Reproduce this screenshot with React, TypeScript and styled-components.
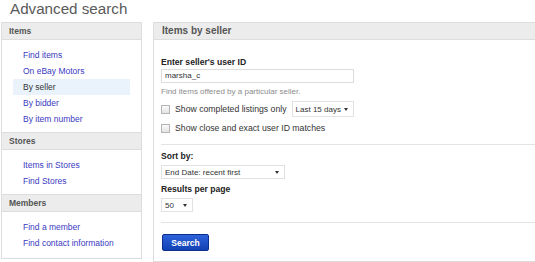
import React, { FC } from "react";
import styled, { createGlobalStyle } from "styled-components";

const GlobalStyle = createGlobalStyle`
  html, body {
    margin: 0;
    padding: 0;
    background: #ffffff;
    overflow: hidden;
  }
  body {
    font-family: "Liberation Sans", Arial, sans-serif;
    color: #333333;
  }
`;

interface NavSection {
  title: string;
  links: string[];
}

const sections: NavSection[] = [
  {
    title: "Items",
    links: ["Find items", "On eBay Motors", "By seller", "By bidder", "By item number"],
  },
  { title: "Stores", links: ["Items in Stores", "Find Stores"] },
  { title: "Members", links: ["Find a member", "Find contact information"] },
];

const Sidebar: FC<{ active: string }> = ({ active }) => (
  <SidePanel>
    {sections.map((s) => (
      <section key={s.title}>
        <SideHeader>{s.title}</SideHeader>
        <LinkList>
          {s.links.map((l) => (
            <NavLink key={l} $active={l === active}>
              {l}
            </NavLink>
          ))}
        </LinkList>
      </section>
    ))}
  </SidePanel>
);

const Select: FC<{ value: string; width: number }> = ({ value, width }) => (
  <SelectBox style={{ width }}>
    <span>{value}</span>
    <Caret />
  </SelectBox>
);

export default function App() {
  return (
    <Page>
      <GlobalStyle />
      <Title>Advanced search</Title>
      <Columns>
        <Sidebar active="By seller" />
        <MainPanel>
          <MainHeader>Items by seller</MainHeader>
          <Body>
            <Label>Enter seller's user ID</Label>
            <TextInput>marsha_c</TextInput>
            <Hint>Find items offered by a particular seller.</Hint>
            <CheckRow $top={3}>
              <Checkbox />
              <span>Show completed listings only</span>
              <Select value="Last 15 days" width={62} />
            </CheckRow>
            <CheckRow $top={3}>
              <Checkbox />
              <span>Show close and exact user ID matches</span>
            </CheckRow>
            <Divider $top={8} />
            <Label $top={5}>Sort by:</Label>
            <Select value="End Date: recent first" width={124} />
            <Label $top={4}>Results per page</Label>
            <Select value="50" width={32} />
            <Divider $top={10} />
            <SearchButton>Search</SearchButton>
          </Body>
        </MainPanel>
      </Columns>
    </Page>
  );
}

const Page = styled.div`
  width: 600px;
`;

const Title = styled.h1`
  margin: 0 0 0 10px;
  height: 22px;
  font-size: 15.2px;
  line-height: 18px;
  font-weight: 400;
  color: #5a5a5a;
`;

const Columns = styled.div`
  display: flex;
  align-items: flex-start;
  gap: 11px;
  padding-left: 1px;
`;

const SidePanel = styled.div`
  width: 139px;
  border: 1px solid #dddddd;
  section + section {
    border-top: 1px solid #dddddd;
  }
  section:last-child > div:last-child {
    padding-bottom: 7px;
  }
`;

const SideHeader = styled.div`
  height: 16px;
  line-height: 16px;
  padding-left: 7px;
  background: #ececec;
  border-bottom: 1px solid #dddddd;
  font-size: 8.5px;
  font-weight: 700;
  color: #555555;
`;

const LinkList = styled.div`
  padding: 7px 11px 5px;
`;

const NavLink = styled.div<{ $active?: boolean }>`
  height: 16px;
  line-height: 16px;
  padding-left: 10px;
  font-size: 8.5px;
  color: ${(p) => (p.$active ? "#333333" : "#3a3ac2")};
  background: ${(p) => (p.$active ? "#eaf3fc" : "transparent")};
`;

const MainPanel = styled.div`
  width: 420px;
  border: 1px solid #dddddd;
  border-right: none;
`;

const MainHeader = styled.div`
  height: 16px;
  line-height: 16px;
  padding-left: 8px;
  background: #ececec;
  border-bottom: 1px solid #dddddd;
  font-size: 10px;
  font-weight: 700;
  color: #555555;
`;

const Body = styled.div`
  display: flex;
  flex-direction: column;
  align-items: flex-start;
  padding: 16px 0 10px 7px;
  font-size: 8.7px;
`;

const Label = styled.div<{ $top?: number }>`
  margin-top: ${(p) => p.$top ?? 0}px;
  line-height: 12px;
  font-size: 8.6px;
  font-weight: 700;
  color: #222222;
`;

const TextInput = styled.div`
  margin-top: 1px;
  box-sizing: border-box;
  width: 193px;
  height: 14px;
  line-height: 12px;
  padding-left: 3px;
  border: 1px solid #dcdcdc;
  font-size: 8px;
  color: #333333;
`;

const Hint = styled.div`
  margin-top: 3px;
  line-height: 12px;
  font-size: 8px;
  color: #8c8c8c;
`;

const CheckRow = styled.div<{ $top: number }>`
  margin-top: ${(p) => p.$top}px;
  display: flex;
  align-items: center;
  height: 16px;
  gap: 4px;
  color: #333333;
  white-space: nowrap;
`;

const Checkbox = styled.span`
  box-sizing: border-box;
  width: 9px;
  height: 9px;
  margin-right: 1px;
  border: 1px solid #b5b5b5;
  background: linear-gradient(#fafafa, #e4e4e4);
`;

const SelectBox = styled.div`
  box-sizing: border-box;
  margin-top: 3px;
  height: 14px;
  display: flex;
  align-items: center;
  justify-content: space-between;
  padding: 0 5px 0 3px;
  border: 1px solid #e2e2e2;
  background: #ffffff;
  font-size: 8px;
  color: #333333;
  white-space: nowrap;
  ${CheckRow} & {
    margin-top: 0;
    margin-left: 1px;
    height: 16px;
  }
`;

const Caret = styled.span`
  flex: none;
  width: 0;
  height: 0;
  border-left: 2.5px solid transparent;
  border-right: 2.5px solid transparent;
  border-top: 3px solid #333333;
`;

const Divider = styled.div<{ $top: number }>`
  align-self: stretch;
  margin-top: ${(p) => p.$top}px;
  border-top: 1px solid #e4e4e4;
`;

const SearchButton = styled.button`
  margin: 11px 0 0 1px;
  width: 47px;
  height: 17px;
  padding: 0;
  border: 1px solid #0b2f8c;
  border-radius: 2px;
  background: linear-gradient(#2d62da, #1242b4);
  color: #ffffff;
  font-family: "Liberation Sans", Arial, sans-serif;
  font-size: 8.5px;
  font-weight: 700;
`;
